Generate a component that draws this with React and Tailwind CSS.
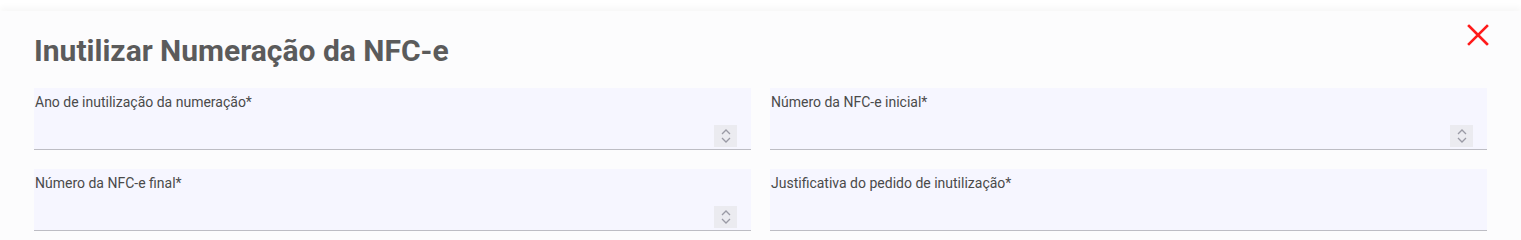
function Spinner() {
  return (
    <div className="absolute right-[14px] bottom-[2px] w-[23px] h-[22px] bg-[#ebebf0] flex flex-col items-center justify-center">
      <svg width="12" height="18" viewBox="0 0 12 18" fill="none" stroke="#9a9aa5" strokeWidth="1.3">
        <path d="M2 7 L6 3 L10 7" />
        <path d="M2 11 L6 15 L10 11" />
      </svg>
    </div>
  );
}

function Field({ label, spinner }) {
  return (
    <div className="relative h-[62px] bg-[#f6f6ff] border-b border-[#bdbdc4]">
      <label className="block pl-px pt-[6px] text-[14px] leading-[17px] text-[#4a4a4a]">{label}</label>
      {spinner && <Spinner />}
    </div>
  );
}

export default function App() {
  return (
    <div className="w-[1521px] h-[240px] bg-white pt-[11px] overflow-hidden" style={{ fontFamily: 'Roboto, "Liberation Sans", sans-serif' }}>
      <div className="relative h-full bg-[#fcfcfd] shadow-[0_-4px_6px_rgba(0,0,0,0.03)] px-[34px] pt-[22px]">
        <button className="absolute right-[32px] top-[13px] text-[#ff1a1a]" aria-label="Fechar">
          <svg width="22" height="22" viewBox="0 0 22 22" stroke="currentColor" strokeWidth="2.6" strokeLinecap="square">
            <path d="M2 2 L20 20 M20 2 L2 20" />
          </svg>
        </button>
        <h1 className="text-[30px] leading-[36px] font-bold text-[#5b5b5b]">Inutilizar Numeração da NFC-e</h1>
        <div className="grid grid-cols-2 gap-x-[19px] gap-y-[19px] mt-[19px]">
          <Field label="Ano de inutilização da numeração*" spinner />
          <Field label="Número da NFC-e inicial*" spinner />
          <Field label="Número da NFC-e final*" spinner />
          <Field label="Justificativa do pedido de inutilização*" />
        </div>
      </div>
    </div>
  );
}
